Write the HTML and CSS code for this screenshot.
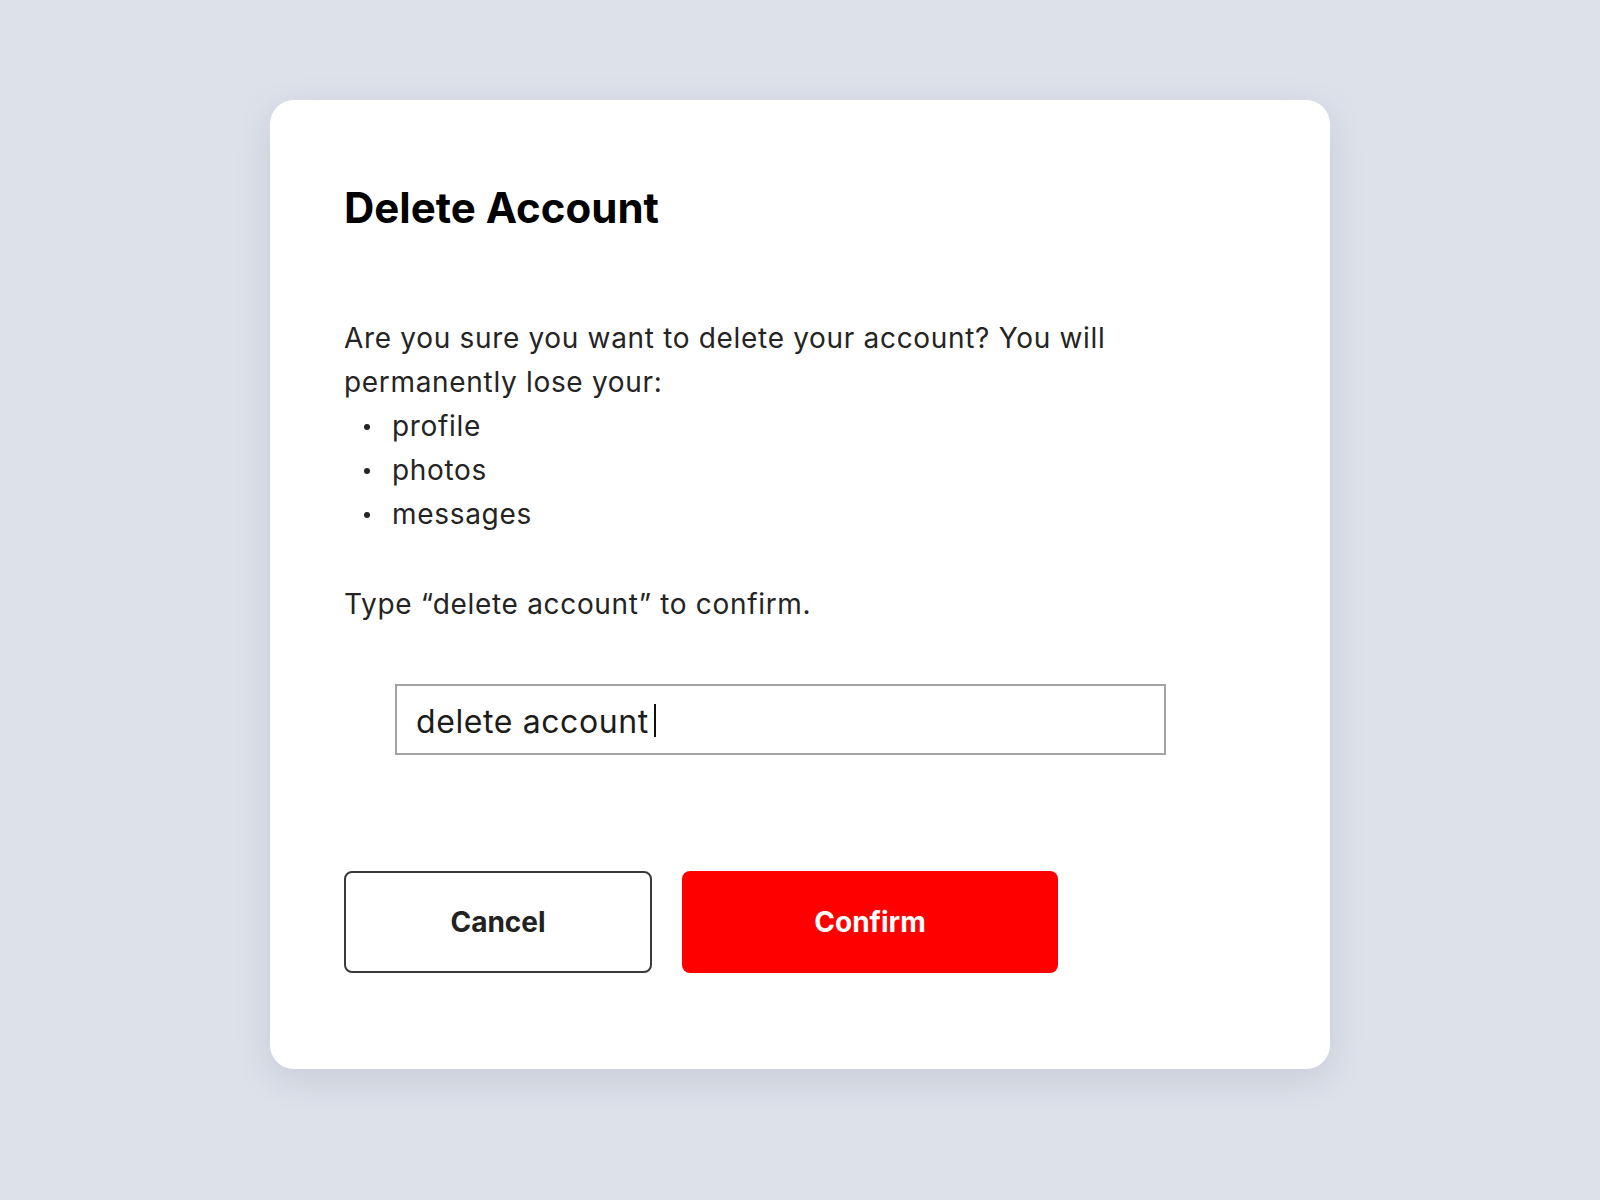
FILE: index.html
```html
<!DOCTYPE html>
<html lang="en">
<head>
<meta charset="utf-8">
<title>Delete Account</title>
<link rel="stylesheet" href="styles.css">
</head>
<body>
  <main class="page">
    <section class="dialog" role="dialog" aria-labelledby="dlg-title">
      <h1 class="dialog-title" id="dlg-title">Delete Account</h1>
      <div class="dialog-body">
        <p class="intro">Are you sure you want to delete your account? You will<br>permanently lose your:</p>
        <ul class="loss-list">
          <li>profile</li>
          <li>photos</li>
          <li>messages</li>
        </ul>
        <p class="instruction">Type “delete account” to confirm.</p>
        <div class="field">
          <div class="text-input" role="textbox">delete account<span class="caret"></span></div>
        </div>
      </div>
      <div class="actions">
        <button class="btn btn-cancel" type="button">Cancel</button>
        <button class="btn btn-confirm" type="button">Confirm</button>
      </div>
    </section>
  </main>
</body>
</html>
```

FILE: styles.css
```css
* {
  box-sizing: border-box;
}

html, body {
  margin: 0;
  padding: 0;
}

body {
  background: #dde1ea;
  font-family: Inter, "Liberation Sans", Arial, sans-serif;
  color: #222222;
  min-height: 1200px;
}

.page {
  display: flex;
  justify-content: center;
  padding-top: 100px;
}

.dialog {
  width: 1060px;
  background: #ffffff;
  border-radius: 24px;
  box-shadow: 0 10px 36px rgba(40, 50, 80, 0.12);
  padding: 82px 72px 96px 74px;
}

.dialog-title {
  margin: 0 0 82px 0;
  font-size: 42px;
  line-height: 52px;
  font-weight: 700;
  color: #000000;
}

.dialog-body {
  font-size: 28px;
  line-height: 44px;
  color: #242424;
  letter-spacing: 0.68px;
}

.intro {
  margin: 0;
}

.loss-list {
  list-style: none;
  margin: 0;
  padding: 0;
}

.loss-list li {
  display: flex;
  align-items: center;
}

.loss-list li::before {
  content: "";
  width: 6px;
  height: 6px;
  border-radius: 50%;
  background: #242424;
  margin: 2px 22px 0 20px;
  flex: none;
}

.instruction {
  margin: 46px 0 0 0;
}

.field {
  margin: 58px 0 0 51px;
}

.text-input {
  width: 771px;
  height: 71px;
  border: 2px solid #a3a3a3;
  display: flex;
  align-items: center;
  padding: 4px 19px 0 19px;
  font-size: 32px;
  letter-spacing: 0.6px;
  color: #1c1c1c;
}

.caret {
  display: inline-block;
  width: 2px;
  height: 33px;
  background: #111111;
  margin-left: 5px;
  margin-top: -2px;
}

.actions {
  display: flex;
  gap: 30px;
  margin-top: 116px;
}

.btn {
  height: 102px;
  border-radius: 8px;
  font-family: Inter, "Liberation Sans", Arial, sans-serif;
  font-size: 28px;
  font-weight: 700;
  cursor: pointer;
}

.btn-cancel {
  width: 308px;
  background: #ffffff;
  border: 2px solid #3a3a3a;
  color: #222222;
}

.btn-confirm {
  width: 376px;
  background: #ff0000;
  border: none;
  color: #ffffff;
}
```
